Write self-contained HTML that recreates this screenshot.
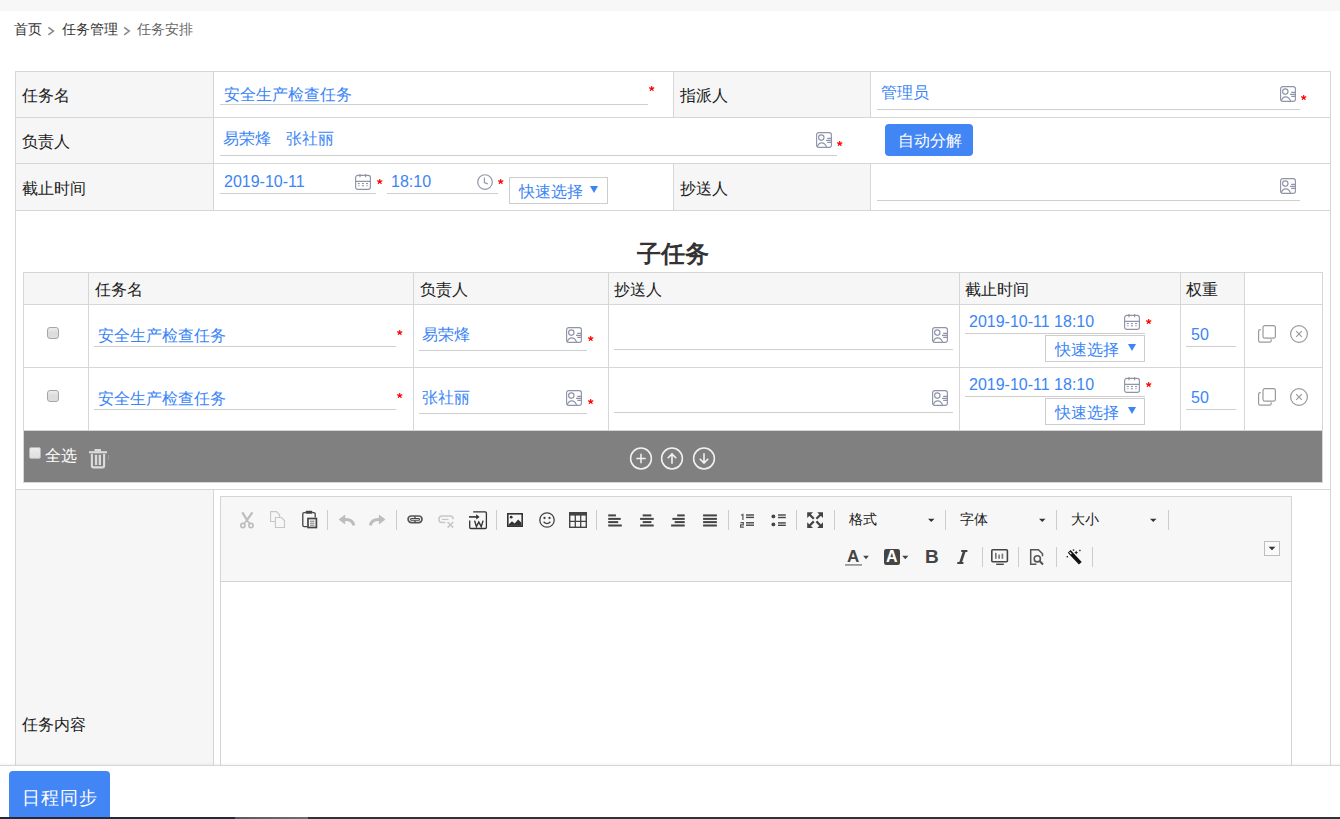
<!DOCTYPE html>
<html><head><meta charset="utf-8">
<style>
*{margin:0;padding:0;box-sizing:border-box}
html,body{width:1340px;height:819px;overflow:hidden;background:#fff}
body{position:relative;font-family:"Liberation Sans",sans-serif;color:#1a1a1a}
.a{position:absolute}
.t{position:absolute;white-space:nowrap;font-size:16px;line-height:16px}
.b{color:#3b85f5}
.hl{position:absolute;height:1px;background:#d6d6d6}
.vl{position:absolute;width:1px;background:#d6d6d6}
.ul{position:absolute;height:1px;background:#cfcfcf}
.bg{position:absolute;background:#f6f6f6}
.st{position:absolute;color:#f00;font-size:16px;line-height:16px;font-family:"Liberation Sans",sans-serif}
.ic{position:absolute;overflow:visible}
.cb{position:absolute;width:12px;height:12px;border:1px solid #a6a6a6;border-radius:3px;background:linear-gradient(#ededed,#dcdcdc 45%,#dedede)}
.qs{position:absolute;border:1px solid #cdcdcd;background:#fff}
.sep{position:absolute;width:1px;background:#cfcfcf}
</style></head><body>
<!-- top band -->
<div class="a" style="left:0;top:0;width:1340px;height:11px;background:#f7f7f7"></div>
<!-- breadcrumb -->
<div class="t" style="left:14px;top:22px;font-size:14px;line-height:14px;color:#333">首页</div>
<div class="t" style="left:62px;top:22px;font-size:14px;line-height:14px;color:#333">任务管理</div>
<div class="t" style="left:137px;top:22px;font-size:14px;line-height:14px;color:#666">任务安排</div>

<svg class="a" style="left:0;top:0" width="200" height="50"><path d="M48.4 27.4L53.4 31.1L48.4 34.8M124.2 27.4L129.2 31.1L124.2 34.8" fill="none" stroke="#8a8a8a" stroke-width="1.6"/></svg>
<!-- form table backgrounds -->
<div class="bg" style="left:15px;top:71px;width:198px;height:139px"></div>
<div class="bg" style="left:673px;top:71px;width:197px;height:46px"></div>
<div class="a" style="left:673px;top:117px;width:197px;height:46px;background:#fff"></div>
<div class="bg" style="left:673px;top:163px;width:197px;height:47px"></div>
<div class="bg" style="left:15px;top:489px;width:198px;height:300px"></div>

<!-- form grid lines -->
<div class="hl" style="left:15px;top:71px;width:1316px"></div>
<div class="hl" style="left:15px;top:117px;width:1316px"></div>
<div class="hl" style="left:15px;top:163px;width:1316px"></div>
<div class="hl" style="left:15px;top:210px;width:1316px"></div>
<div class="hl" style="left:15px;top:489px;width:1316px"></div>
<div class="vl" style="left:15px;top:71px;height:720px"></div>
<div class="vl" style="left:1330px;top:71px;height:720px"></div>
<div class="vl" style="left:213px;top:71px;height:139px"></div>
<div class="vl" style="left:213px;top:489px;height:300px"></div>
<div class="vl" style="left:673px;top:71px;height:46px"></div>
<div class="vl" style="left:870px;top:71px;height:46px"></div>
<div class="vl" style="left:673px;top:163px;height:47px"></div>
<div class="vl" style="left:870px;top:163px;height:47px"></div>

<!-- labels -->
<div class="t" style="left:22px;top:88px">任务名</div>
<div class="t" style="left:22px;top:134px">负责人</div>
<div class="t" style="left:22px;top:181px">截止时间</div>
<div class="t" style="left:680px;top:88px">指派人</div>
<div class="t" style="left:680px;top:181px">抄送人</div>
<div class="t" style="left:22px;top:717px">任务内容</div>

<!-- row1 values -->
<div class="t b" style="left:224px;top:87px">安全生产检查任务</div>
<div class="ul" style="left:220px;top:104px;width:428px"></div>
<svg class="ic" style="left:649px;top:86px" width="6" height="6"><use href="#str"/></svg>
<div class="t b" style="left:881px;top:85px">管理员</div>
<div class="ul" style="left:877px;top:109px;width:423px"></div>
<svg class="ic" style="left:1301px;top:95px" width="6" height="6"><use href="#str"/></svg>

<!-- row2 values -->
<div class="t b" style="left:223px;top:131px">易荣烽</div>
<div class="t b" style="left:286px;top:131px">张社丽</div>
<div class="ul" style="left:220px;top:155px;width:617px"></div>
<svg class="ic" style="left:837px;top:141px" width="6" height="6"><use href="#str"/></svg>
<div class="a" style="left:885px;top:124px;width:88px;height:32px;background:#4285f4;border-radius:4px"></div>
<div class="t" style="left:898px;top:133px;color:#fff">自动分解</div>

<!-- row3 values -->
<div class="t b" style="left:224px;top:174px">2019-10-11</div>
<div class="ul" style="left:220px;top:193px;width:156px"></div>
<svg class="ic" style="left:377px;top:179px" width="6" height="6"><use href="#str"/></svg>
<div class="t b" style="left:391px;top:174px">18:10</div>
<div class="ul" style="left:387px;top:193px;width:111px"></div>
<svg class="ic" style="left:498px;top:179px" width="6" height="6"><use href="#str"/></svg>
<div class="qs" style="left:509px;top:177px;width:99px;height:27px"></div>
<div class="t b" style="left:519px;top:184px">快速选择</div>
<div class="ul" style="left:877px;top:200px;width:423px"></div>

<!-- subtask title -->
<div class="t" style="left:637px;top:242px;font-size:24px;line-height:24px;font-weight:bold;color:#333">子任务</div>

<!-- subtable header bg -->
<div class="bg" style="left:23px;top:272px;width:1221px;height:32px"></div>
<div class="a" style="left:23px;top:430px;width:1300px;height:53px;background:#808080;border:1px solid #d6d6d6"></div>
<!-- subtable lines -->
<div class="hl" style="left:23px;top:272px;width:1300px"></div>
<div class="hl" style="left:23px;top:304px;width:1300px"></div>
<div class="hl" style="left:23px;top:367px;width:1300px"></div>
<div class="vl" style="left:23px;top:272px;height:159px"></div>
<div class="vl" style="left:88px;top:272px;height:159px"></div>
<div class="vl" style="left:413px;top:272px;height:159px"></div>
<div class="vl" style="left:608px;top:272px;height:159px"></div>
<div class="vl" style="left:959px;top:272px;height:159px"></div>
<div class="vl" style="left:1180px;top:272px;height:159px"></div>
<div class="vl" style="left:1244px;top:272px;height:159px"></div>
<div class="vl" style="left:1322px;top:272px;height:159px"></div>

<div class="t" style="left:95px;top:282px">任务名</div>
<div class="t" style="left:420px;top:282px">负责人</div>
<div class="t" style="left:614px;top:282px">抄送人</div>
<div class="t" style="left:965px;top:282px">截止时间</div>
<div class="t" style="left:1186px;top:282px">权重</div>

<!--ROWS-->
<svg width="0" height="0" style="position:absolute">
<defs>
<symbol id="ct" viewBox="0 0 16 16"><g fill="none" stroke="#8f94a7" stroke-width="1.15"><rect x="0.6" y="0.6" width="14.8" height="14.8" rx="2.2"/><circle cx="5.3" cy="5.6" r="2.7"/><path d="M1.2 15.2C2 12 3.6 10.8 5.6 10.8S9.6 12 10.6 15.2"/><path d="M11.2 6.3H15.2M10 8.4H15.2M11.2 10.4H15.2"/></g></symbol>
<symbol id="cal" viewBox="0 0 16 16"><g fill="none" stroke="#8f94a7" stroke-width="1.15"><rect x="0.6" y="1.4" width="14.8" height="14" rx="2.2"/><path d="M0.6 7.3H15.4M5 0V3.2M10.6 0V3.2"/></g><g fill="#8f94a7"><rect x="2.8" y="9" width="2" height="1.1"/><rect x="6.9" y="9" width="2" height="1.1"/><rect x="11" y="9" width="2" height="1.1"/><rect x="2.8" y="11.2" width="2" height="1.1" opacity=".6"/><rect x="6.9" y="11.2" width="2" height="1.1"/><rect x="11" y="11.2" width="2" height="1.1" opacity=".6"/></g></symbol>
<symbol id="clk" viewBox="0 0 16 16"><g fill="none" stroke="#8f94a7" stroke-width="1.15"><circle cx="8" cy="8" r="7.3"/><path d="M7.4 3.4V8.6L10.8 9.9"/></g></symbol>
<symbol id="cp" viewBox="0 0 18 18"><g fill="none" stroke="#9a9a9a" stroke-width="1.2"><rect x="5" y="0.6" width="12.4" height="12.6" rx="1.8"/><path d="M2.8 4.6H2.2C1.3 4.6 0.6 5.3 0.6 6.2V15.6C0.6 16.5 1.3 17.2 2.2 17.2H11.6C12.5 17.2 13.2 16.5 13.2 15.6V14.2"/></g></symbol>
<symbol id="cx" viewBox="0 0 18 18"><g fill="none" stroke="#9a9a9a" stroke-width="1.2"><circle cx="9" cy="9" r="8.4"/><path d="M6.2 6.2L11.8 11.8M11.8 6.2L6.2 11.8"/></g></symbol>
<symbol id="str" viewBox="0 0 6 6"><path d="M2.7 2.6L2.70 0.30M2.7 2.6L4.89 1.89M2.7 2.6L4.05 4.46M2.7 2.6L1.35 4.46M2.7 2.6L0.51 1.89" stroke="#f00" stroke-width="1.15" stroke-linecap="round"/></symbol>
<symbol id="tri" viewBox="0 0 8 7"><path d="M0 0H8L4 7Z" fill="#3b85f5"/></symbol>
</defs></svg>
<svg class="ic" style="left:1280px;top:86px" width="16" height="16"><use href="#ct"/></svg>
<svg class="ic" style="left:816px;top:132px" width="16" height="16"><use href="#ct"/></svg>
<svg class="ic" style="left:355px;top:174px" width="16" height="16"><use href="#cal"/></svg>
<svg class="ic" style="left:477px;top:174px" width="16" height="16"><use href="#clk"/></svg>
<svg class="ic" style="left:590px;top:186px" width="8" height="7"><use href="#tri"/></svg>
<svg class="ic" style="left:1280px;top:178px" width="16" height="16"><use href="#ct"/></svg>
<div class="cb" style="left:47px;top:327px"></div>
<div class="t b" style="left:98px;top:328px;">安全生产检查任务</div>
<div class="ul" style="left:94px;top:346px;width:302px"></div>
<svg class="ic" style="left:397px;top:330px" width="6" height="6"><use href="#str"/></svg>
<div class="t b" style="left:422px;top:327px;">易荣烽</div>
<div class="ul" style="left:419px;top:350px;width:168px"></div>
<svg class="ic" style="left:566px;top:327px" width="16" height="16"><use href="#ct"/></svg>
<svg class="ic" style="left:588px;top:336px" width="6" height="6"><use href="#str"/></svg>
<div class="ul" style="left:614px;top:349px;width:339px"></div>
<svg class="ic" style="left:932px;top:327px" width="16" height="16"><use href="#ct"/></svg>
<div class="t b" style="left:969px;top:314px;">2019-10-11 18:10</div>
<div class="ul" style="left:965px;top:333px;width:180px"></div>
<svg class="ic" style="left:1124px;top:314px" width="16" height="16"><use href="#cal"/></svg>
<svg class="ic" style="left:1146px;top:319px" width="6" height="6"><use href="#str"/></svg>
<div class="qs" style="left:1045px;top:335px;width:100px;height:27px"></div>
<div class="t b" style="left:1055px;top:342px;">快速选择</div>
<svg class="ic" style="left:1128px;top:344px" width="8" height="7"><use href="#tri"/></svg>
<div class="t b" style="left:1191px;top:327px;">50</div>
<div class="ul" style="left:1186px;top:346px;width:50px"></div>
<svg class="ic" style="left:1258px;top:325px" width="18" height="18"><use href="#cp"/></svg>
<svg class="ic" style="left:1290px;top:325px" width="18" height="18"><use href="#cx"/></svg>
<div class="cb" style="left:47px;top:390px"></div>
<div class="t b" style="left:98px;top:391px;">安全生产检查任务</div>
<div class="ul" style="left:94px;top:409px;width:302px"></div>
<svg class="ic" style="left:397px;top:393px" width="6" height="6"><use href="#str"/></svg>
<div class="t b" style="left:422px;top:390px;">张社丽</div>
<div class="ul" style="left:419px;top:413px;width:168px"></div>
<svg class="ic" style="left:566px;top:390px" width="16" height="16"><use href="#ct"/></svg>
<svg class="ic" style="left:588px;top:399px" width="6" height="6"><use href="#str"/></svg>
<div class="ul" style="left:614px;top:412px;width:339px"></div>
<svg class="ic" style="left:932px;top:390px" width="16" height="16"><use href="#ct"/></svg>
<div class="t b" style="left:969px;top:377px;">2019-10-11 18:10</div>
<div class="ul" style="left:965px;top:396px;width:180px"></div>
<svg class="ic" style="left:1124px;top:377px" width="16" height="16"><use href="#cal"/></svg>
<svg class="ic" style="left:1146px;top:382px" width="6" height="6"><use href="#str"/></svg>
<div class="qs" style="left:1045px;top:398px;width:100px;height:27px"></div>
<div class="t b" style="left:1055px;top:405px;">快速选择</div>
<svg class="ic" style="left:1128px;top:407px" width="8" height="7"><use href="#tri"/></svg>
<div class="t b" style="left:1191px;top:390px;">50</div>
<div class="ul" style="left:1186px;top:409px;width:50px"></div>
<svg class="ic" style="left:1258px;top:388px" width="18" height="18"><use href="#cp"/></svg>
<svg class="ic" style="left:1290px;top:388px" width="18" height="18"><use href="#cx"/></svg>
<div class="a" style="left:29px;top:447px;width:12px;height:12px;border:1px solid #b8b8b8;border-radius:2px;background:linear-gradient(#ececec,#dedede)"></div>
<div class="t" style="left:45px;top:448px;color:#fff">全选</div>
<svg class="ic" style="left:89px;top:449px" width="18" height="19" viewBox="0 0 18 19"><g fill="#dcdcdc"><rect x="0" y="2.2" width="18" height="2.1"/><rect x="5.5" y="0" width="6.5" height="2.4" rx="0.6"/><rect x="5.9" y="5.8" width="2.3" height="10.2"/><rect x="9.7" y="5.8" width="2.3" height="10.2"/></g><path d="M2.9 5V16.8C2.9 18 3.5 18.4 4.4 18.4H13.6C14.5 18.4 15.1 18 15.1 16.8V5" fill="none" stroke="#dcdcdc" stroke-width="2.1"/></svg>
<div class="a" style="left:108px;top:455px;width:1px;height:5px;background:#9a9a9a"></div>
<svg class="ic" style="left:630px;top:447px" width="22" height="23"><circle cx="11" cy="11.5" r="10.4" fill="none" stroke="#f2f2f2" stroke-width="1.5"/><path d="M11 6.8V16.2M6.3 11.5H15.7" stroke="#f2f2f2" stroke-width="1.5"/></svg>
<svg class="ic" style="left:661px;top:447px" width="22" height="23"><circle cx="11" cy="11.5" r="10.4" fill="none" stroke="#f2f2f2" stroke-width="1.5"/><path d="M11 16.8V7M6.8 11.2L11 7L15.2 11.2" fill="none" stroke="#f2f2f2" stroke-width="1.6"/></svg>
<svg class="ic" style="left:693px;top:447px" width="22" height="23"><circle cx="11" cy="11.5" r="10.4" fill="none" stroke="#f2f2f2" stroke-width="1.5"/><path d="M11 6.2V16M6.8 11.8L11 16L15.2 11.8" fill="none" stroke="#f2f2f2" stroke-width="1.6"/></svg>
<!--/ROWS-->

<!-- editor -->
<div class="a" style="left:220px;top:496px;width:1072px;height:330px;border:1px solid #d4d4d4;background:#fff"></div>
<div class="a" style="left:221px;top:497px;width:1070px;height:85px;background:#f7f7f7;border-bottom:1px solid #d4d4d4"></div>
<!--TOOLBAR-->
<svg class="a" style="left:0;top:0" width="1340" height="819" viewBox="0 0 1340 819"><rect x="327" y="510" width="1" height="20" fill="#cdcdcd"/><rect x="396" y="510" width="1" height="20" fill="#cdcdcd"/><rect x="496" y="510" width="1" height="20" fill="#cdcdcd"/><rect x="596" y="510" width="1" height="20" fill="#cdcdcd"/><rect x="728" y="510" width="1" height="20" fill="#cdcdcd"/><rect x="796" y="510" width="1" height="20" fill="#cdcdcd"/><rect x="834" y="510" width="1" height="20" fill="#cdcdcd"/><rect x="945" y="510" width="1" height="20" fill="#cdcdcd"/><rect x="1056" y="510" width="1" height="20" fill="#cdcdcd"/><rect x="1168" y="510" width="1" height="20" fill="#cdcdcd"/><rect x="982" y="547" width="1" height="20" fill="#cdcdcd"/><rect x="1018" y="547" width="1" height="20" fill="#cdcdcd"/><rect x="1056" y="547" width="1" height="20" fill="#cdcdcd"/><rect x="1092" y="547" width="1" height="20" fill="#cdcdcd"/><g fill="none" stroke="#bdbdbd" stroke-width="1.6"><path d="M242.3 512.3L247.6 520.8M252.4 512.3L246.4 520.8" stroke-width="2.2"/><path d="M246.9 520.5L244 523.6M246.9 520.5L249.9 523.6"/><circle cx="242.9" cy="525.5" r="2.1"/><circle cx="251" cy="525.5" r="2.1"/></g><g fill="none" stroke="#c6c6c6" stroke-width="1.1"><path d="M274.9 521.5H270.6V511.6H276.4L279.6 514.8V517.3"/><path d="M275.4 517.5H281.4L284.5 520.6V527.5H275.4Z"/></g><g fill="none" stroke="#444" stroke-width="1.3"><path d="M305.8 512.6H304.2Q302.8 512.6 302.8 514V525.2Q302.8 526.6 304.2 526.6H307.2M312.2 512.6H313.8Q315.2 512.6 315.2 514V517.6"/></g><rect x="305.6" y="510.8" width="6.8" height="2.9" rx="1" fill="#444"/><rect x="308" y="518.5" width="8.4" height="9" fill="#f7f7f7" stroke="#444" stroke-width="1.7"/><path d="M310 521.2H314.4M310 523.2H314.4M310 525.2H314.4" stroke="#777" stroke-width="1"/><path d="M338.6 519.6L345.2 514.4V524.6Z" fill="#bdbdbd"/><path d="M344.2 519.6Q352.3 518.8 353.9 525.4" fill="none" stroke="#bdbdbd" stroke-width="3"/><g transform="translate(724.1 0) scale(-1 1)"><path d="M338.6 519.6L345.2 514.4V524.6Z" fill="#bdbdbd"/><path d="M344.2 519.6Q352.3 518.8 353.9 525.4" fill="none" stroke="#bdbdbd" stroke-width="3"/></g><rect x="408.1" y="516" width="13.9" height="6.6" rx="3.3" fill="none" stroke="#555" stroke-width="1.7"/><rect x="410.6" y="518.5" width="8.9" height="1.8" rx="0.9" fill="none" stroke="#444" stroke-width="1.1"/><path d="M415 516.6V518M415 520.8V522.2" stroke="#333" stroke-width="1.2"/><g fill="none" stroke="#c8c8c8" stroke-width="1.5"><path d="M445.4 522.6H442Q438.9 522.6 438.9 519.3Q438.9 516 442 516H450.2Q453.2 516 453.2 519.3"/><path d="M441.8 519.4H448.6" stroke-width="1.3"/><path d="M447.6 522L453.2 527.6M453.2 522L447.6 527.6" stroke-width="1.7"/></g><g fill="none" stroke="#333" stroke-width="1.3"><path d="M473.2 511.8H485.3Q486.4 511.8 486.4 512.9V527.4Q486.4 528.5 485.3 528.5H470.8Q469.7 528.5 469.7 527.4V520.4"/><path d="M469 516.9H477" stroke-width="1.6"/><path d="M474.6 520.6L476.4 526.6L478.8 522L481.2 526.6L483.1 520.6" stroke-width="1.4"/></g><path d="M476.2 514.3L479.6 516.9L476.2 519.5Z" fill="#333"/><rect x="507.8" y="513.8" width="14.4" height="12.4" fill="none" stroke="#333" stroke-width="1.6"/><circle cx="511.2" cy="517.2" r="1.4" fill="#333"/><path d="M508.6 525.8V524.6L512 521.2L514.6 523.4L518.2 519.6L521.4 522.8V525.8Z" fill="#333"/><circle cx="547" cy="520" r="7.2" fill="none" stroke="#444" stroke-width="1.3"/><circle cx="544.5" cy="518" r="1.15" fill="#444"/><circle cx="549.5" cy="518" r="1.15" fill="#444"/><path d="M543.6 521.8Q547 525.4 550.4 521.8" fill="none" stroke="#444" stroke-width="1.3"/><rect x="569" y="512" width="18" height="3.6" fill="#444"/><rect x="569.7" y="512.7" width="16.6" height="14.6" fill="none" stroke="#444" stroke-width="1.4"/><path d="M575.3 515V527.5M580.7 515V527.5M569.5 521.3H586.5" stroke="#444" stroke-width="1.3"/><rect x="608.2" y="514.4" width="7.7" height="2" fill="#444"/><rect x="608.2" y="517.9" width="12.5" height="2" fill="#444"/><rect x="608.2" y="521.1" width="10" height="2" fill="#444"/><rect x="608.2" y="524.5" width="13.6" height="2" fill="#444"/><rect x="642.7" y="514.4" width="8.7" height="2" fill="#444"/><rect x="640.1" y="517.9" width="13.6" height="2" fill="#444"/><rect x="642.7" y="521.1" width="8.7" height="2" fill="#444"/><rect x="640.1" y="524.5" width="13.6" height="2" fill="#444"/><rect x="677.2" y="514.4" width="7.5" height="2" fill="#444"/><rect x="672.4" y="517.9" width="12.3" height="2" fill="#444"/><rect x="674.7" y="521.1" width="10" height="2" fill="#444"/><rect x="671.1" y="524.5" width="13.6" height="2" fill="#444"/><rect x="703.1" y="514.4" width="13.8" height="2" fill="#444"/><rect x="703.1" y="517.9" width="13.8" height="2" fill="#444"/><rect x="703.1" y="521.1" width="13.8" height="2" fill="#444"/><rect x="703.1" y="524.5" width="13.8" height="2" fill="#444"/><g fill="#444"><rect x="746" y="514.3" width="8" height="1.4"/><rect x="746" y="516.7" width="8" height="1.4"/><rect x="746" y="522.1" width="8" height="1.4"/><rect x="746" y="524.5" width="8" height="1.4"/></g><path d="M741 515.2L742.9 514.4V519.9M740.4 522.7H743.3V524.8H740.6V527.2H743.9" fill="none" stroke="#555" stroke-width="1.2"/><g fill="#444"><circle cx="773.4" cy="516.4" r="1.9"/><circle cx="773.4" cy="524.4" r="1.9"/><rect x="778" y="514.3" width="7.8" height="1.4"/><rect x="778" y="516.8" width="7.8" height="1.4"/><rect x="778" y="522.2" width="7.8" height="1.4"/><rect x="778" y="524.6" width="7.8" height="1.4"/></g><g fill="#444"><path d="M807.2 512.2H813L807.2 518Z"/><path d="M823 512.2H817.2L823 518Z"/><path d="M807.2 528H813L807.2 522.2Z"/><path d="M823 528H817.2L823 522.2Z"/></g><path d="M809.5 514.5L813.8 518.8M820.7 514.5L816.4 518.8M809.5 525.7L813.8 521.4M820.7 525.7L816.4 521.4" stroke="#444" stroke-width="2.2"/><path d="M928 518.8H934.5L931.25 522Z" fill="#333"/><path d="M1039 518.8H1045.5L1042.25 522Z" fill="#333"/><path d="M1150 518.8H1156.5L1153.25 522Z" fill="#333"/><rect x="845" y="564" width="17" height="1.8" fill="#999"/><path d="M863.2 555.8H868.8L866 559.2Z" fill="#444"/><rect x="884" y="549" width="16" height="16" rx="2.2" fill="#444"/><path d="M902.2 555.8H908.4L905.3 559.2Z" fill="#444"/><path d="M961.2 551H967.4M957.3 563H963.4" stroke="#444" stroke-width="1.8"/><path d="M964.4 551L960.4 563" stroke="#444" stroke-width="2.6"/><rect x="991.8" y="549.8" width="15.6" height="12" rx="1" fill="none" stroke="#444" stroke-width="1.6"/><rect x="995" y="552.8" width="1.6" height="6" fill="#777"/><rect x="998.3" y="554.6" width="1.6" height="4.2" fill="#777"/><rect x="1001.6" y="553.6" width="1.6" height="5.2" fill="#777"/><rect x="996.2" y="563.6" width="7.6" height="1.4" fill="#444"/><path d="M1036.4 564.3H1030.7V549.7H1038.4L1042.5 553.8V556.2" fill="none" stroke="#555" stroke-width="1.5"/><circle cx="1037.3" cy="558.8" r="3.1" fill="none" stroke="#555" stroke-width="1.6"/><path d="M1039.6 561.1L1043 564.5" stroke="#555" stroke-width="2.1"/><path d="M1069.2 551.4L1080.3 563.3" stroke="#111" stroke-width="3.8"/><path d="M1069.6 552.2L1071.4 554.1" stroke="#fff" stroke-width="1.1"/><g fill="#222"><rect x="1072.8" y="549.4" width="1.4" height="1.4"/><rect x="1079.2" y="549.8" width="1.4" height="1.4"/><rect x="1066.6" y="556" width="1.4" height="1.4"/><path d="M1076.2 550.6L1076.9 552L1078.2 552.6L1076.9 553.2L1076.2 554.6L1075.5 553.2L1074.2 552.6L1075.5 552Z"/></g><rect x="1264.5" y="541.5" width="15" height="14" fill="#fafafa" stroke="#bdbdbd" stroke-width="1"/><path d="M1268.6 546.8H1275.4L1272 550.2Z" fill="#333"/></svg>
<div class="t" style="left:849px;top:512px;font-size:14px;line-height:14px">格式</div>
<div class="t" style="left:960px;top:512px;font-size:14px;line-height:14px">字体</div>
<div class="t" style="left:1071px;top:512px;font-size:14px;line-height:14px">大小</div>
<div class="t" style="left:847px;top:548px;font-size:17px;line-height:17px;font-weight:bold;color:#444">A</div>
<div class="t" style="left:886px;top:549px;font-size:16px;line-height:16px;font-weight:bold;color:#fff">A</div>
<div class="t" style="left:925px;top:547px;font-size:19px;line-height:19px;font-weight:bold;color:#444">B</div>

<!--/TOOLBAR-->

<!-- bottom bar -->
<div class="a" style="left:0;top:762px;width:1340px;height:3px;background:linear-gradient(rgba(0,0,0,0),rgba(0,0,0,0.04))"></div>
<div class="a" style="left:0;top:765px;width:1340px;height:54px;background:#fff;border-top:1px solid #d6d6d6"></div>
<div class="a" style="left:9px;top:771px;width:101px;height:50px;background:#4285f4;border-radius:4px"></div>
<div class="t" style="left:22px;top:789px;font-size:18px;line-height:18px;color:#fff;letter-spacing:1px">日程同步</div>
<div class="a" style="left:0;top:817px;width:1340px;height:2px;background:#2f3337"></div>
<div class="a" style="left:0;top:817px;width:235px;height:2px;background:#1f2b36"></div>
<div class="a" style="left:235px;top:817px;width:73px;height:2px;background:linear-gradient(90deg,#555b60,#6a6e72)"></div>
</body></html>
